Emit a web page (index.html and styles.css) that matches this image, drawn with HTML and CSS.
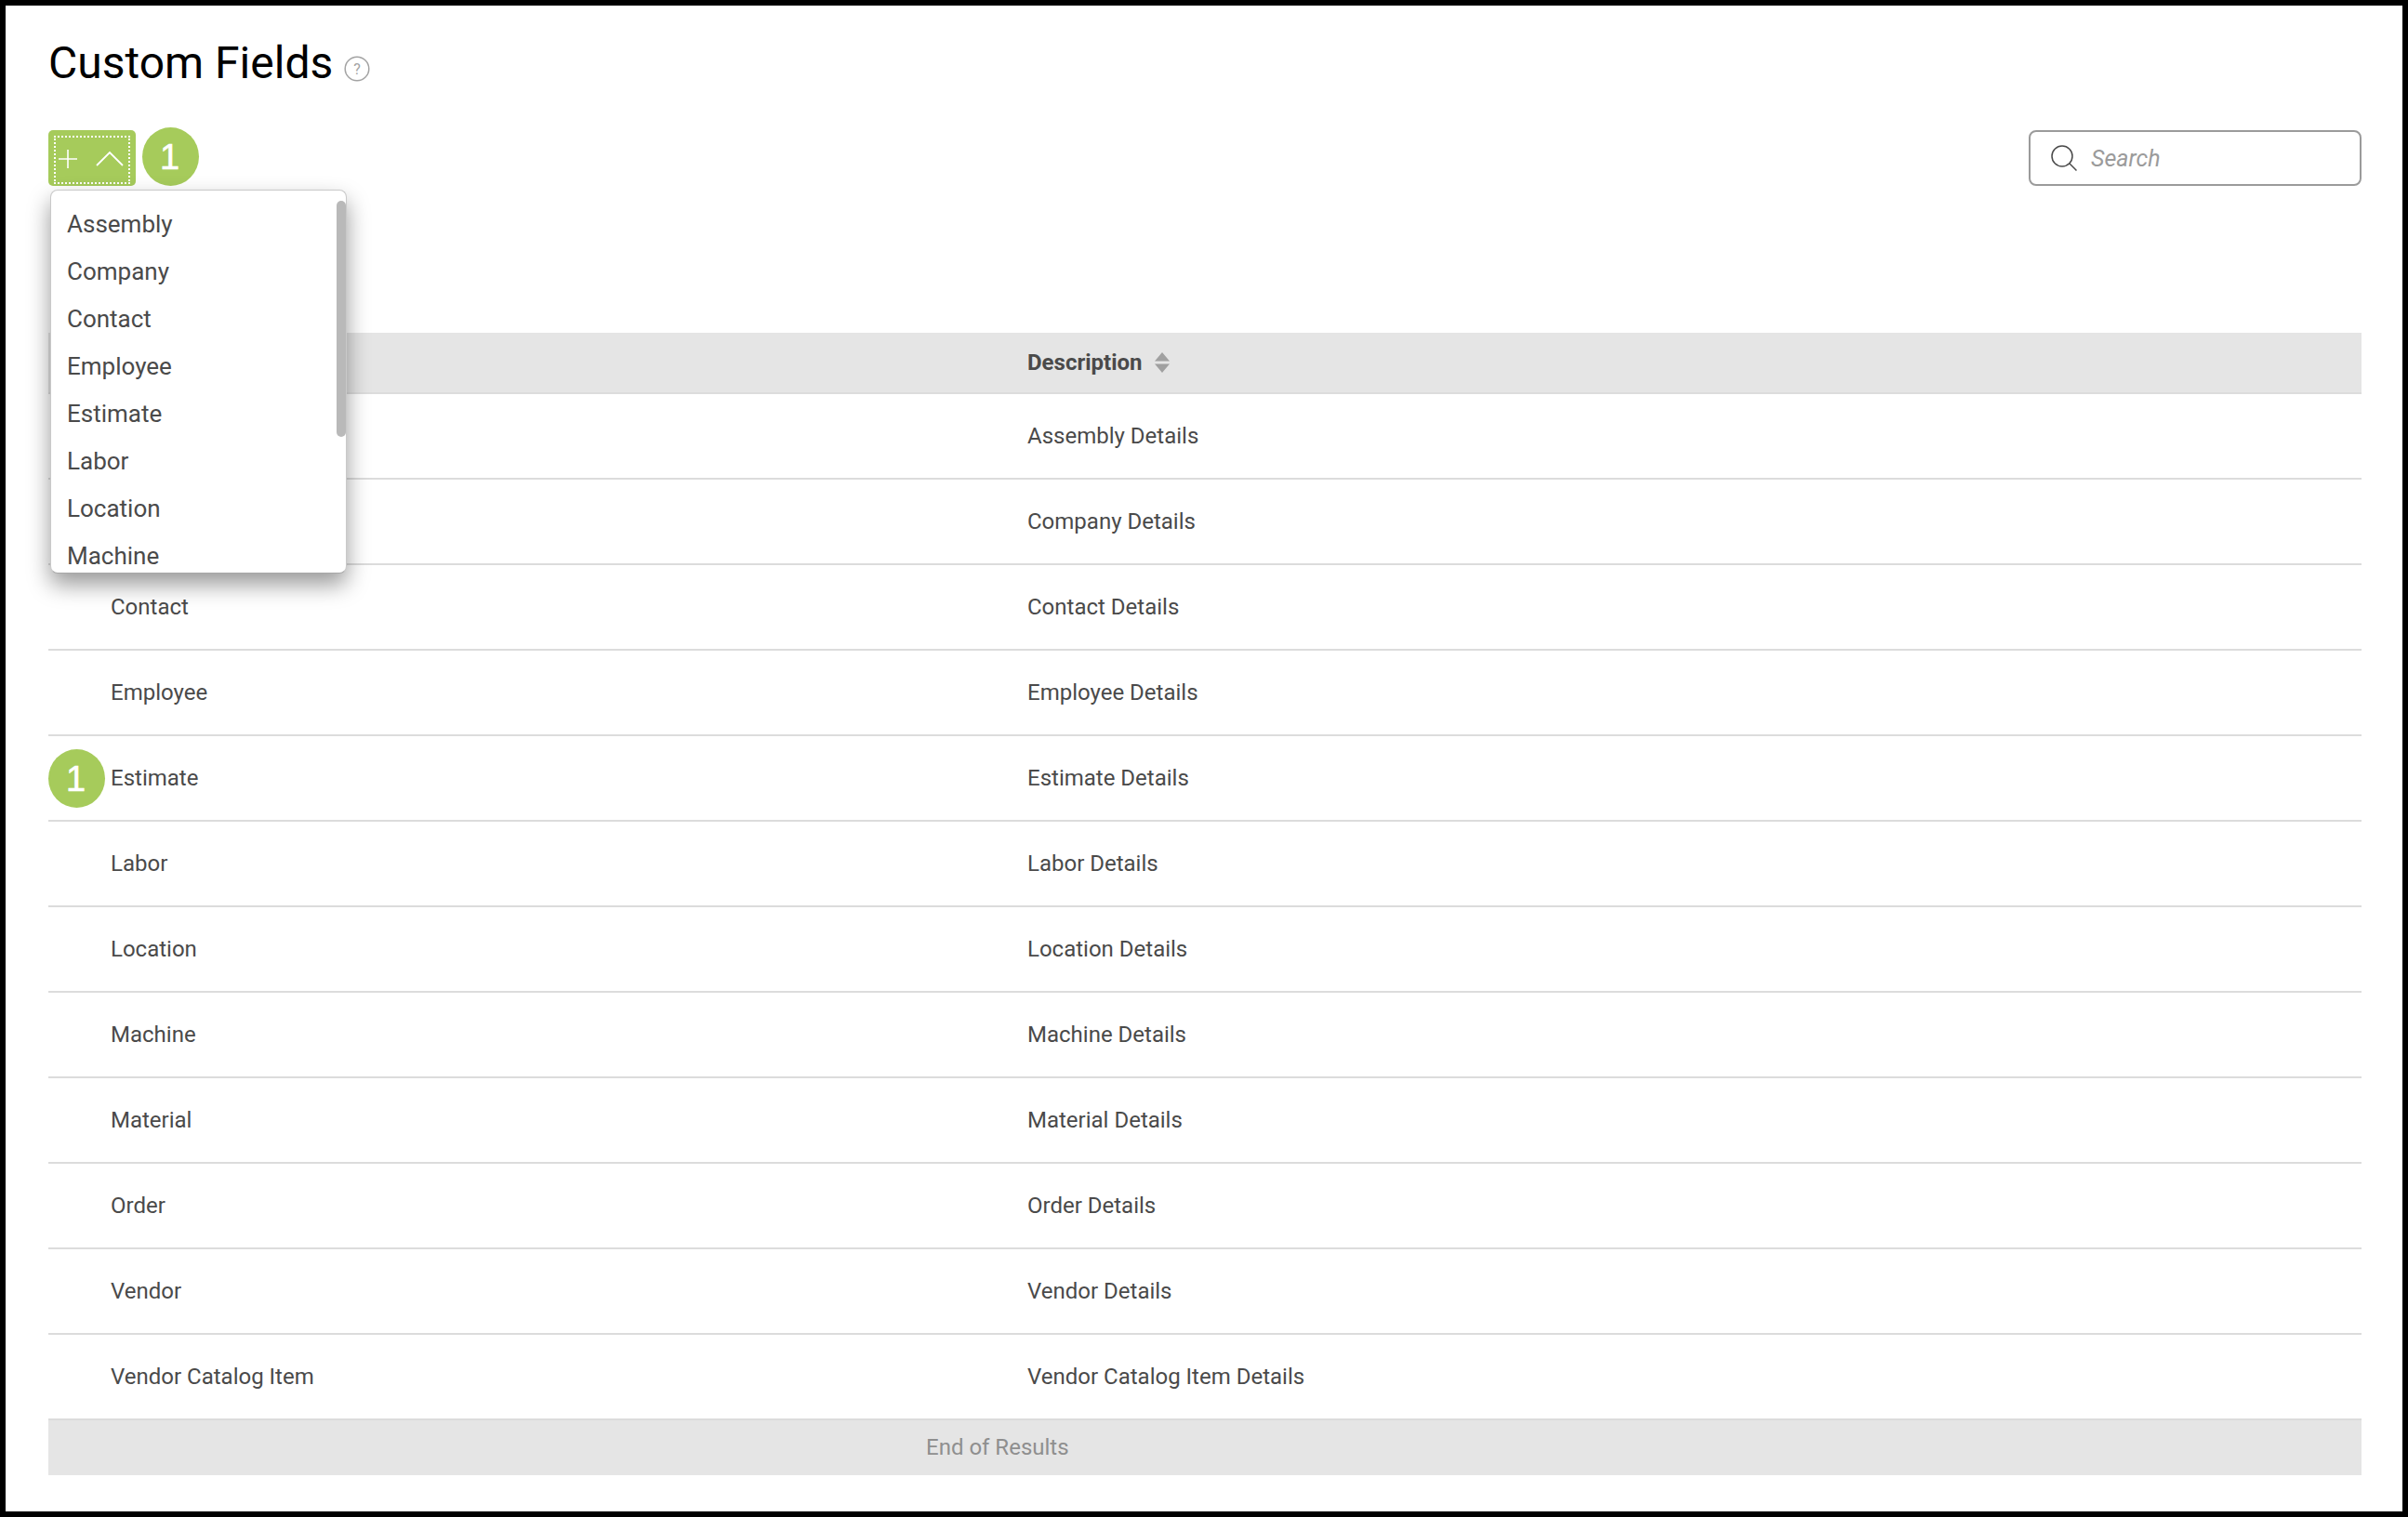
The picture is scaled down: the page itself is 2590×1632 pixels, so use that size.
FILE: index.html
```html
<!DOCTYPE html>
<html lang="en">
<head>
<meta charset="utf-8">
<title>Custom Fields</title>
<link rel="stylesheet" href="styles.css">
</head>
<body>
<div class="frame">
  <header class="title-row">
    <h1 class="title">Custom Fields</h1>
    <svg class="help" viewBox="0 0 28 28" width="28" height="28"><circle cx="14" cy="14" r="12.8" fill="none" stroke="#a3a3a3" stroke-width="1.5"/><text x="14" y="19.500" text-anchor="middle" class="help-q">?</text></svg>
  </header>
  <div class="toolbar">
    <div class="add-wrap">
      <button class="add-btn" type="button">
        <span class="add-inner">
          <svg viewBox="0 0 24 24" width="24" height="24"><path d="M2 12h20M12 2v20" stroke="#fff" stroke-width="1.6" fill="none"/></svg>
          <svg viewBox="0 0 32 20" width="32" height="20"><path d="M2 17 16 3l14 14" stroke="#fff" stroke-width="1.8" fill="none"/></svg>
        </span>
      </button>
      <span class="badge badge-top">1</span>
      <div class="menu">
        <ul class="menu-list">
          <li>Assembly</li>
          <li>Company</li>
          <li>Contact</li>
          <li>Employee</li>
          <li>Estimate</li>
          <li>Labor</li>
          <li>Location</li>
          <li>Machine</li>
        </ul>
        <span class="thumb"></span>
      </div>
    </div>
    <div class="search">
      <svg viewBox="0 0 30 30" width="30" height="30"><circle cx="13" cy="13" r="11" fill="none" stroke="#4a4a4a" stroke-width="1.5"/><path d="m20.800 20.800 7.700 7.700" stroke="#4a4a4a" stroke-width="1.5" fill="none"/></svg>
      <span class="search-text">Search</span>
    </div>
  </div>
  <div class="table">
    <div class="row head">
      <div class="cell name"></div>
      <div class="cell desc">Description
        <svg class="sort" viewBox="0 0 16 22" width="16" height="22"><path d="M8 0 16 9.500H0zM8 22 0 12.500H16z" fill="#a0a0a0"/></svg>
      </div>
    </div>
    <div class="row"><div class="cell name"></div><div class="cell desc">Assembly Details</div></div>
    <div class="row"><div class="cell name"></div><div class="cell desc">Company Details</div></div>
    <div class="row"><div class="cell name">Contact</div><div class="cell desc">Contact Details</div></div>
    <div class="row"><div class="cell name">Employee</div><div class="cell desc">Employee Details</div></div>
    <div class="row"><div class="cell name">Estimate</div><div class="cell desc">Estimate Details</div><span class="badge badge-row">1</span></div>
    <div class="row"><div class="cell name">Labor</div><div class="cell desc">Labor Details</div></div>
    <div class="row"><div class="cell name">Location</div><div class="cell desc">Location Details</div></div>
    <div class="row"><div class="cell name">Machine</div><div class="cell desc">Machine Details</div></div>
    <div class="row"><div class="cell name">Material</div><div class="cell desc">Material Details</div></div>
    <div class="row"><div class="cell name">Order</div><div class="cell desc">Order Details</div></div>
    <div class="row"><div class="cell name">Vendor</div><div class="cell desc">Vendor Details</div></div>
    <div class="row"><div class="cell name">Vendor Catalog Item</div><div class="cell desc">Vendor Catalog Item Details</div></div>
    <div class="end">End of Results</div>
  </div>
</div>
</body>
</html>
```
FILE: styles.css
```css
* { box-sizing: border-box; }
html, body { margin: 0; padding: 0; }
body { background: #fff; font-family: Roboto, "Liberation Sans", sans-serif; color: #4a4a4a; }
.frame { width: 2590px; height: 1632px; border: 6px solid #000; padding: 0 44px 0 46px; overflow: hidden; }

.title-row { display: flex; align-items: center; height: 134px; padding-bottom: 10px; }
.title { margin: 0; font-size: 48px; font-weight: 400; line-height: 56px; color: #000; }
.help { margin: 11px 0 0 12px; flex: none; }
.help-q { font-family: Roboto, sans-serif; font-size: 16px; fill: #a3a3a3; }

.toolbar { display: flex; justify-content: space-between; align-items: center; height: 60px; }
.add-wrap { position: relative; }
.add-btn { display: block; width: 94px; height: 60px; padding: 6px 6px 2px; border: 0; border-radius: 5px; background: #a6cb5b; }
.add-inner { display: flex; align-items: center; gap: 17px; width: 100%; height: 100%; padding: 0 0 2px 1px; border: 2px dotted #fff; }
.badge { position: absolute; display: flex; align-items: center; justify-content: center; width: 61px; height: 63px; padding: 1px 2px 0 0; border-radius: 50%; background: #a6cb5b; color: #fff; font-family: "Liberation Sans", Arial, sans-serif; font-size: 38px; font-weight: 400; -webkit-text-stroke: .6px #fff; }
.badge-top { left: 101px; top: -3px; }
.badge-row { left: 0; top: 14px; }

.menu { position: absolute; left: 2px; top: 64px; width: 319px; height: 413px; border: 1px solid #c9c9c9; border-bottom-color: #a8a8a8; border-radius: 8px; background: #fff; box-shadow: 0 12px 24px rgba(0, 0, 0, .4); overflow: hidden; z-index: 2; }
.menu-list { list-style: none; margin: 0; padding: 11px 0 0 17px; font-size: 26px; line-height: 51px; color: #4a4a4a; }
.thumb { position: absolute; right: 0; top: 11px; width: 10px; height: 254px; border-radius: 5px; background: #b9b9b9; }

.search { display: flex; align-items: center; gap: 14px; width: 358px; height: 60px; padding-left: 21px; border: 2px solid #9b9b9b; border-radius: 8px; }
.search-text { font-size: 25px; font-style: italic; color: #9b9b9b; }

.table { margin-top: 158px; font-size: 24px; }
.row { position: relative; display: flex; align-items: center; height: 92px; border-bottom: 2px solid #dcdcdc; }
.head { height: 66px; background: #e5e5e5; font-weight: 700; }
.cell { white-space: nowrap; }
.name { width: 1053px; padding-left: 67px; }
.desc { display: flex; align-items: center; gap: 13px; }
.end { height: 59px; padding-left: 944px; background: #e5e5e5; color: #8f8f8f; line-height: 58px; }
```
